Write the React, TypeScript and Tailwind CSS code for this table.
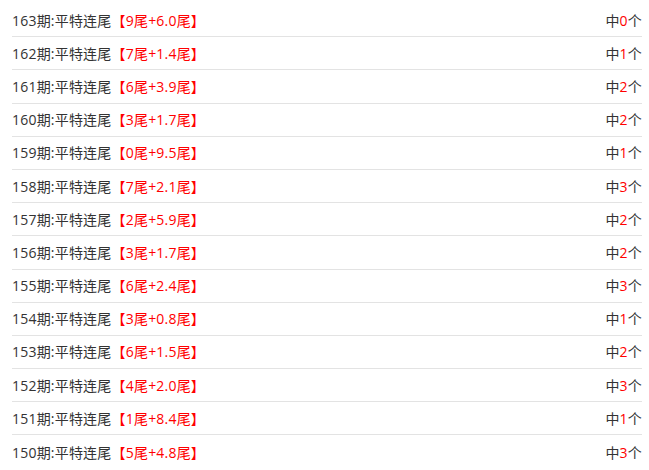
import React from 'react';

const rows = [
  { issue: 163, tail: '9', extra: '6.0', hit: 0 },
  { issue: 162, tail: '7', extra: '1.4', hit: 1 },
  { issue: 161, tail: '6', extra: '3.9', hit: 2 },
  { issue: 160, tail: '3', extra: '1.7', hit: 2 },
  { issue: 159, tail: '0', extra: '9.5', hit: 1 },
  { issue: 158, tail: '7', extra: '2.1', hit: 3 },
  { issue: 157, tail: '2', extra: '5.9', hit: 2 },
  { issue: 156, tail: '3', extra: '1.7', hit: 2 },
  { issue: 155, tail: '6', extra: '2.4', hit: 3 },
  { issue: 154, tail: '3', extra: '0.8', hit: 1 },
  { issue: 153, tail: '6', extra: '1.5', hit: 2 },
  { issue: 152, tail: '4', extra: '2.0', hit: 3 },
  { issue: 151, tail: '1', extra: '8.4', hit: 1 },
  { issue: 150, tail: '5', extra: '4.8', hit: 3 },
];

const App = () => {
  return (
    <div className="min-h-screen bg-white pt-[4px] font-['Open_Sans','Noto_Sans_CJK_SC',sans-serif] text-[14px] tracking-[0.2px] text-[#333]">
      <ul className="ml-[12px] w-[630px]">
        {rows.map((r, i) => (
          <li
            key={r.issue}
            className={`flex h-[33.2px] items-center justify-between ${i < rows.length - 1 ? 'border-b border-[#e3e3e3]' : ''}`}
          >
            <span>
              {r.issue}期:平特连尾
              <span className="text-[#ff0000]">【{r.tail}尾+{r.extra}尾】</span>
            </span>
            <span>
              中<span className="text-[#ff0000]">{r.hit}</span>个
            </span>
          </li>
        ))}
      </ul>
    </div>
  );
};

export default App;
